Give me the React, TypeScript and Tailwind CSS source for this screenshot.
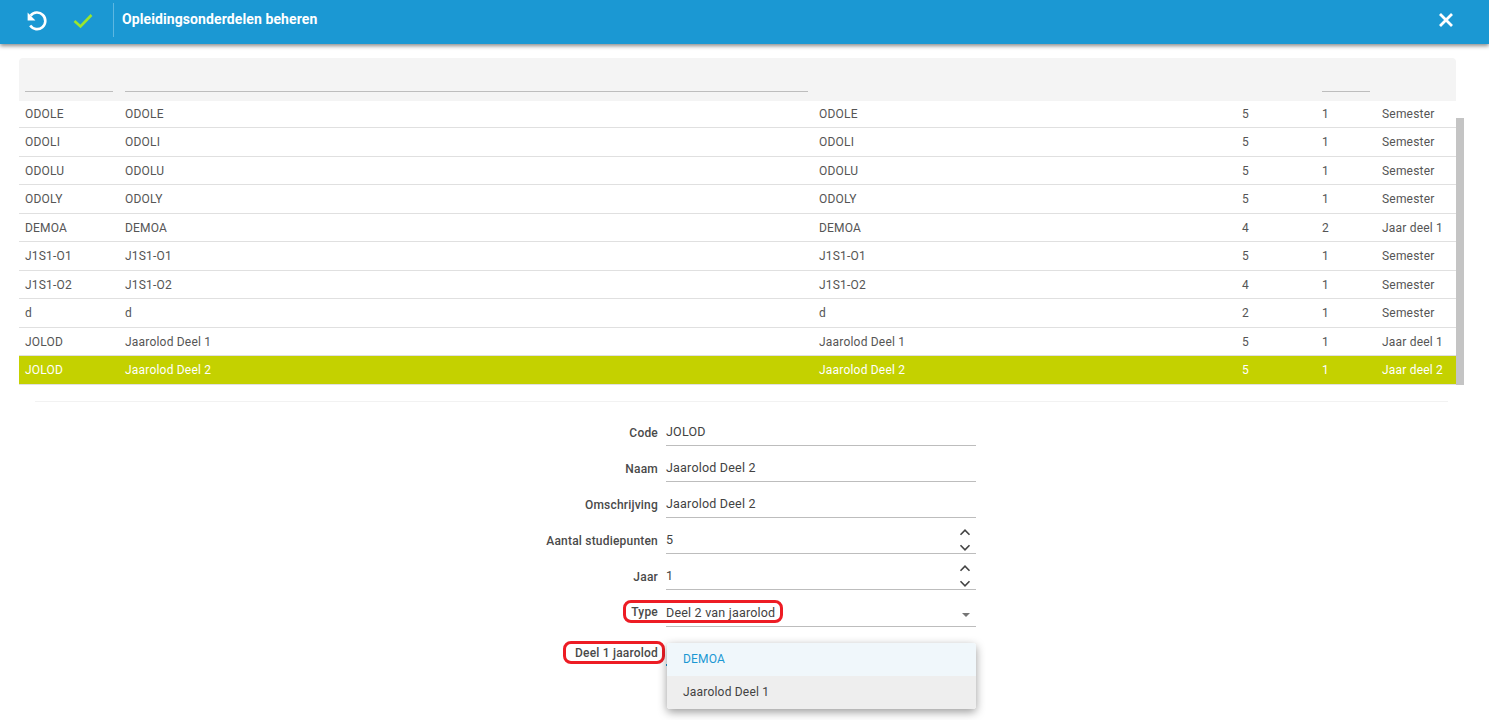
import React from "react";

const rows = [
  ["ODOLE", "ODOLE", "ODOLE", "5", "1", "Semester"],
  ["ODOLI", "ODOLI", "ODOLI", "5", "1", "Semester"],
  ["ODOLU", "ODOLU", "ODOLU", "5", "1", "Semester"],
  ["ODOLY", "ODOLY", "ODOLY", "5", "1", "Semester"],
  ["DEMOA", "DEMOA", "DEMOA", "4", "2", "Jaar deel 1"],
  ["J1S1-O1", "J1S1-O1", "J1S1-O1", "5", "1", "Semester"],
  ["J1S1-O2", "J1S1-O2", "J1S1-O2", "4", "1", "Semester"],
  ["d", "d", "d", "2", "1", "Semester"],
  ["JOLOD", "Jaarolod Deel 1", "Jaarolod Deel 1", "5", "1", "Jaar deel 1"],
  ["JOLOD", "Jaarolod Deel 2", "Jaarolod Deel 2", "5", "1", "Jaar deel 2"],
];

const cols = "grid grid-cols-[100px_694px_423px_80px_60px_80px]";

function Spinner() {
  return (
    <div className="mr-[4px] -mt-[2px] flex flex-col gap-[6px]">
      <svg width="14" height="9" viewBox="0 0 14 9" fill="none" stroke="#444" strokeWidth="1.6"><path d="M2.5 6.7l4.5-4.5 4.5 4.5" /></svg>
      <svg width="14" height="9" viewBox="0 0 14 9" fill="none" stroke="#444" strokeWidth="1.6"><path d="M2.5 2.3l4.5 4.5 4.5-4.5" /></svg>
    </div>
  );
}

function Field({ label, value, right, h = "h-[36px]", labelPt = "pt-[16px]" }: { label: string; value: string; right?: React.ReactNode; h?: string; labelPt?: string }) {
  return (
    <div className={`flex ${h}`}>
      <div className={`w-[639px] pr-[8px] text-right text-[12px] font-medium leading-[14px] tracking-[0.2px] text-[#4a4a4a] ${labelPt}`}>{label}</div>
      <div className="flex w-[310px] items-center justify-between border-b border-[#bdbdbd] pt-[10px] text-[12.5px] tracking-[0.2px] text-[#424242]">
        <span>{value}</span>
        {right}
      </div>
    </div>
  );
}

export default function App() {
  return (
    <div className="relative h-[720px] w-[1489px] overflow-hidden bg-white font-['Roboto',sans-serif]">
      <header className="relative z-10 flex h-[44px] items-center bg-[#1b98d3] shadow-[0_2px_4px_rgba(0,0,0,0.45)]">
        <div className="mb-[2px] flex w-[73px] justify-end pr-[25px]">
          <svg width="22" height="22" viewBox="0 0 22 22" fill="none" stroke="#fff" strokeWidth="2.6">
            <path d="M4.6 5.6A8.3 8.3 0 1 1 4.2 15.6" />
            <path d="M1.6 2.6v7.8h7.8z" fill="#fff" stroke="none" />
          </svg>
        </div>
        <svg className="mb-[3px]" width="20" height="16" viewBox="0 0 20 16" fill="none" stroke="#9ae62d" strokeWidth="2.6">
          <path d="M1.5 8l6 5.5L18.5 2" />
        </svg>
        <div className="mb-[4px] ml-[20px] h-[34px] w-px bg-[#5db7e1]" />
        <div className="mb-[5px] ml-[8px] text-[14px] font-bold tracking-[0.1px] text-white">Opleidingsonderdelen beheren</div>
        <svg className="mb-[4px] ml-auto mr-[35px]" width="16" height="16" viewBox="0 0 16 16" fill="none" stroke="#fff" strokeWidth="2.8">
          <path d="M2 2l12 12M14 2L2 14" />
        </svg>
      </header>

      <div className="relative ml-[19px] mt-[14px] w-[1437px]">
        <div className={`${cols} relative z-[1] h-[43px] rounded-t-[4px] bg-[#f4f4f4]`}>
          <div className="pl-[6px]"><div className="mt-[33px] h-px w-[88px] bg-[#bdbdbd]" /></div>
          <div className="pl-[6px]"><div className="mt-[33px] h-px w-[683px] bg-[#bdbdbd]" /></div>
          <div />
          <div />
          <div className="pl-[6px]"><div className="mt-[33px] h-px w-[48px] bg-[#bdbdbd]" /></div>
          <div />
        </div>
        <div className="-mt-[1.5px]">
          {rows.map((r, i) => {
            const sel = i === rows.length - 1;
            return (
              <div key={i} className={`${cols} h-[28.5px] items-center border-b border-[#e0e0e0] pt-[1px] text-[12px] tracking-[0.2px] ${sel ? "bg-[#c4d100] text-white" : "bg-white text-[#555]"}`}>
                {r.map((c, j) => (
                  <div key={j} className="whitespace-nowrap pl-[6px]">{c}</div>
                ))}
              </div>
            );
          })}
        </div>
        <div className="absolute left-[1437px] top-[60px] h-[267px] w-[8px] bg-[#c4c4c4]" />
      </div>

      <div className="ml-[35px] mt-[16.5px] h-px w-[1413px] bg-[#f2f2f2]" />

      <div className="ml-[27px] mt-[8px]">
        <Field label="Code" value="JOLOD" />
        <Field label="Naam" value="Jaarolod Deel 2" />
        <Field label="Omschrijving" value="Jaarolod Deel 2" />
        <Field label="Aantal studiepunten" value="5" right={<Spinner />} />
        <Field label="Jaar" value="1" right={<Spinner />} />
        <Field
          label="Type"
          value="Deel 2 van jaarolod"
          h="h-[37px]"
          labelPt="pt-[15px]"
          right={<span className="mr-[6px] mt-[3px] h-0 w-0 border-x-[4.5px] border-t-[4.5px] border-x-transparent border-t-[#757575]" />}
        />
        <div className="flex pt-[19px]">
          <div className="w-[639px] pr-[8px] text-right text-[12px] font-medium leading-[14px] tracking-[0.2px] text-[#4a4a4a]">Deel 1 jaarolod</div>
        </div>
      </div>

      <div className="absolute left-[623px] top-[600px] h-[23px] w-[160px] rounded-[8px] border-[3px] border-[#ed1c24]" />
      <div className="absolute left-[563px] top-[641px] h-[23px] w-[102px] rounded-[8px] border-[3px] border-[#ed1c24]" />

      <div className="absolute left-[666px] top-[664px] h-[2px] w-[3px] bg-[#1b98d3]" />
      <div className="absolute left-[667px] top-[643px] w-[309px] overflow-hidden rounded-[3px] bg-white text-[12px] tracking-[0.2px] shadow-[0_3px_10px_rgba(0,0,0,0.4)]">
        <div className="flex h-[33px] items-center bg-[#f0f7fb] pb-[2px] pl-[16px] text-[#1b98d3]">DEMOA</div>
        <div className="flex h-[33px] items-center bg-[#eeeeee] pb-[2px] pl-[16px] text-[#424242]">Jaarolod Deel 1</div>
      </div>
    </div>
  );
}
